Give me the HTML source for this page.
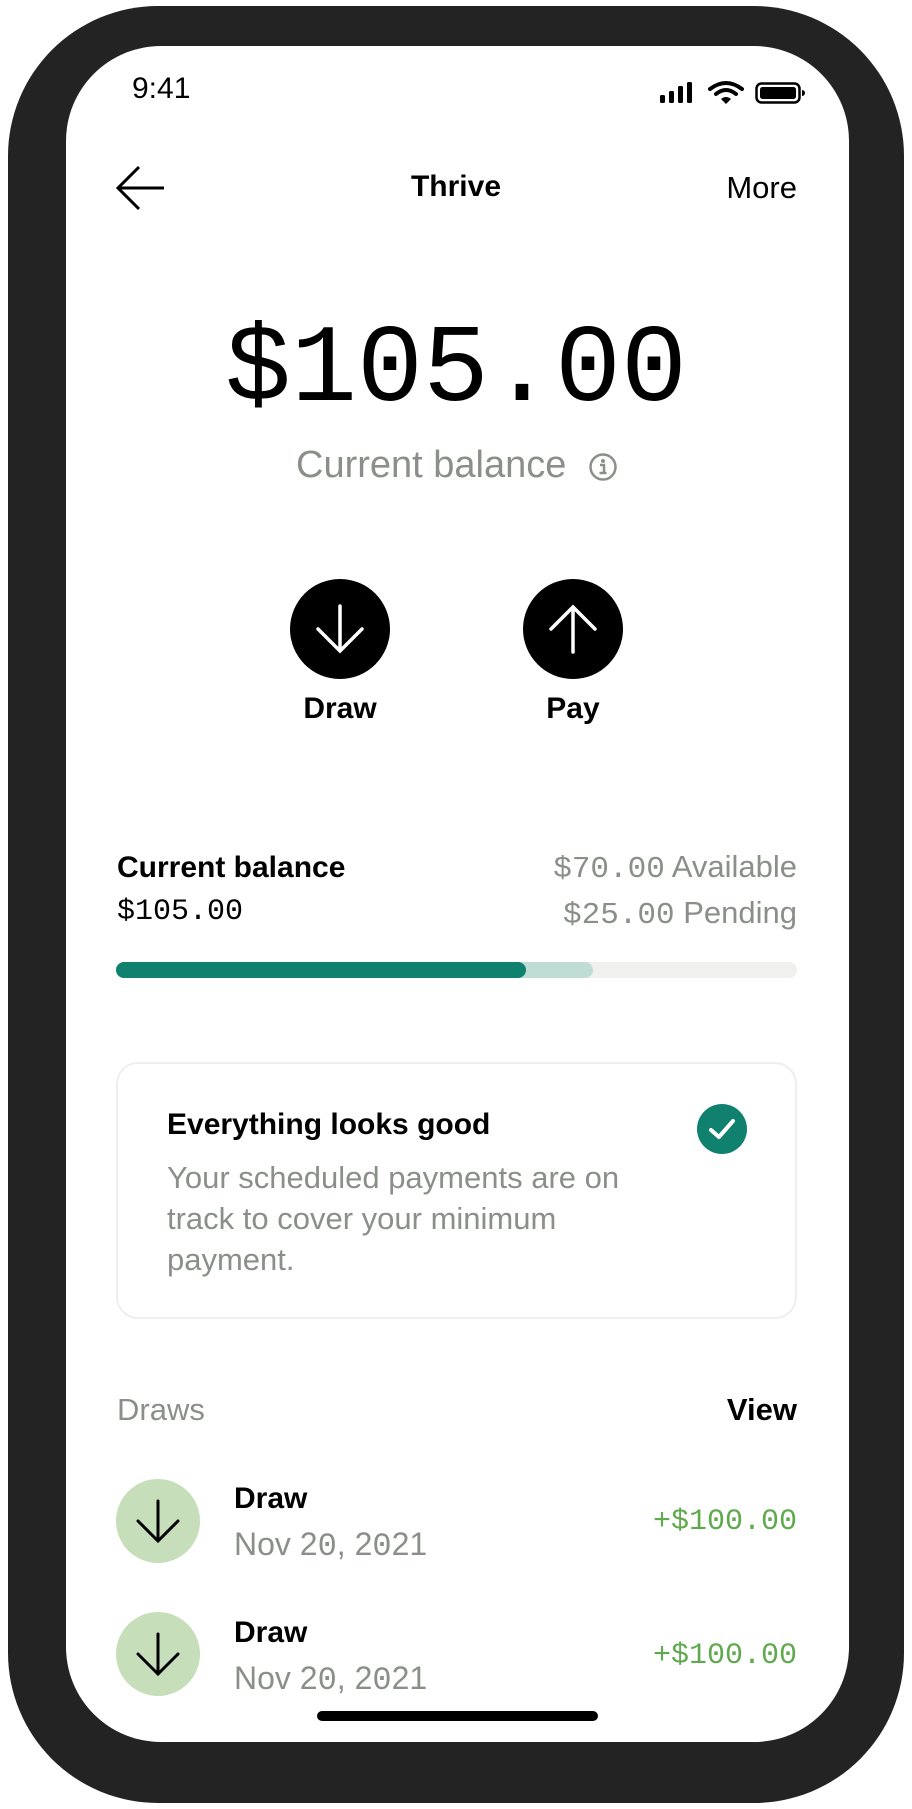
<!DOCTYPE html>
<html><head><meta charset="utf-8"><style>
*{margin:0;padding:0;box-sizing:border-box}
body{width:912px;height:1809px;background:#fff;position:relative;overflow:hidden;font-family:"Liberation Sans",sans-serif;color:#000}
.frame{position:absolute;left:8px;top:6px;width:896px;height:1797px;background:#232323;border-radius:150px}
.screen{position:absolute;left:66px;top:46px;width:783px;height:1696px;background:#fff;border-radius:95px;overflow:hidden}
.a{position:absolute;white-space:nowrap}
.mono{font-family:"Liberation Mono",monospace}
.g{color:#8b8f8a}
.b{font-weight:bold}
</style></head><body>
<div class="frame"></div>
<div class="screen"></div>
<div class="a" style="left:132px;top:72px;font-size:30px">9:41</div>
<svg class="a" style="left:658px;top:80px" width="150" height="26" viewBox="0 0 150 26">
<rect x="2" y="15" width="5" height="8" rx="1.5"/><rect x="11" y="11" width="5" height="12" rx="1.5"/><rect x="20" y="6" width="5" height="17" rx="1.5"/><rect x="29" y="2" width="5" height="21" rx="1.5"/>
<path d="M52 9 Q68 -3 84 9" stroke="#000" stroke-width="4" fill="none" stroke-linecap="round"/>
<path d="M58 14 Q68 6 78 14" stroke="#000" stroke-width="4" fill="none" stroke-linecap="round"/>
<path d="M63 19 L68 24 L73 19 Q68 15 63 19Z"/>
<rect x="98.5" y="3.5" width="43" height="19" rx="5" fill="none" stroke="#000" stroke-width="2.5"/>
<rect x="102" y="7" width="36" height="12" rx="2.5"/>
<path d="M144 10 v6 a3 3 0 0 0 0 -6z"/>
</svg>
<svg class="a" style="left:115px;top:165px" width="52" height="46" viewBox="0 0 52 46"><path d="M3 23 H49 M24 2 L3 23 L24 44" stroke="#000" stroke-width="3" fill="none"/></svg>
<div class="a b" style="left:0;width:912px;text-align:center;top:170px;font-size:30px">Thrive</div>
<div class="a" style="right:115px;top:170px;font-size:31px">More</div>
<div class="a mono" style="left:0;width:912px;text-align:center;top:312px;font-size:110px;line-height:120px">$105.00</div>
<div class="a g" style="left:296px;top:444px;font-size:38px">Current balance</div>
<svg class="a" style="left:588px;top:452px" width="30" height="30" viewBox="0 0 30 30"><circle cx="15" cy="15" r="12.5" fill="none" stroke="#8b8f8a" stroke-width="2.5"/><circle cx="15" cy="9" r="2" fill="#8b8f8a"/><path d="M12 13h4v8M11.5 21h7" stroke="#8b8f8a" stroke-width="2.5" fill="none"/></svg>
<svg class="a" style="left:290px;top:579px" width="100" height="100" viewBox="0 0 100 100"><circle cx="50" cy="50" r="50"/><path d="M50 27 V71 M28 50 L50 72 L72 50" stroke="#fff" stroke-width="3.5" fill="none" stroke-linecap="round"/></svg>
<svg class="a" style="left:523px;top:579px" width="100" height="100" viewBox="0 0 100 100"><circle cx="50" cy="50" r="50"/><path d="M50 73 V29 M28 50 L50 28 L72 50" stroke="#fff" stroke-width="3.5" fill="none" stroke-linecap="round"/></svg>
<div class="a b" style="left:240px;width:200px;text-align:center;top:692px;font-size:30px">Draw</div>
<div class="a b" style="left:473px;width:200px;text-align:center;top:692px;font-size:30px">Pay</div>
<div class="a b" style="left:117px;top:851px;font-size:30px">Current balance</div>
<div class="a mono" style="left:117px;top:895px;font-size:30px">$105.00</div>
<div class="a g" style="right:115px;top:849px;font-size:31px"><span class="mono">$70.00</span> Available</div>
<div class="a g" style="right:115px;top:895px;font-size:31px"><span class="mono">$25.00</span> Pending</div>
<div class="a" style="left:116px;top:962px;width:681px;height:16px;border-radius:8px;background:#f0f0ee"></div>
<div class="a" style="left:116px;top:962px;width:477px;height:16px;border-radius:8px;background:#c0ddd5"></div>
<div class="a" style="left:116px;top:962px;width:410px;height:16px;border-radius:8px;background:#10806f"></div>
<div class="a" style="left:116px;top:1062px;width:681px;height:257px;border:2px solid #eeeeec;border-radius:22px"></div>
<div class="a b" style="left:167px;top:1108px;font-size:30px">Everything looks good</div>
<svg class="a" style="left:697px;top:1104px" width="50" height="50" viewBox="0 0 50 50"><circle cx="25" cy="25" r="25" fill="#10806f"/><path d="M14 26 L22 33 L36 17" stroke="#fff" stroke-width="4" fill="none" stroke-linecap="round" stroke-linejoin="round"/></svg>
<div class="a g" style="left:167px;top:1157px;font-size:31px;line-height:41px;white-space:normal;width:470px">Your scheduled payments are on track to cover your minimum payment.</div>
<div class="a g" style="left:117px;top:1392px;font-size:31px">Draws</div>
<div class="a b" style="right:115px;top:1392px;font-size:31px">View</div>
<svg class="a" style="left:116px;top:1479px" width="84" height="84" viewBox="0 0 84 84"><circle cx="42" cy="42" r="42" fill="#c6dfba"/><path d="M42 22 V62 M22 42 L42 62 L62 42" stroke="#000" stroke-width="3" fill="none" stroke-linecap="round"/></svg>
<div class="a b" style="left:234px;top:1482px;font-size:30px">Draw</div>
<div class="a g" style="left:234px;top:1526px;font-size:32px">Nov 2<span class="mono">0</span>, 2<span class="mono">0</span>21</div>
<div class="a mono" style="right:115px;top:1505px;font-size:30px;color:#5faa4e">+$100.00</div>
<svg class="a" style="left:116px;top:1612px" width="84" height="84" viewBox="0 0 84 84"><circle cx="42" cy="42" r="42" fill="#c6dfba"/><path d="M42 22 V62 M22 42 L42 62 L62 42" stroke="#000" stroke-width="3" fill="none" stroke-linecap="round"/></svg>
<div class="a b" style="left:234px;top:1616px;font-size:30px">Draw</div>
<div class="a g" style="left:234px;top:1660px;font-size:32px">Nov 2<span class="mono">0</span>, 2<span class="mono">0</span>21</div>
<div class="a mono" style="right:115px;top:1639px;font-size:30px;color:#5faa4e">+$100.00</div>
<div class="a" style="left:317px;top:1711px;width:281px;height:10px;border-radius:5px;background:#000"></div>
</body></html>
